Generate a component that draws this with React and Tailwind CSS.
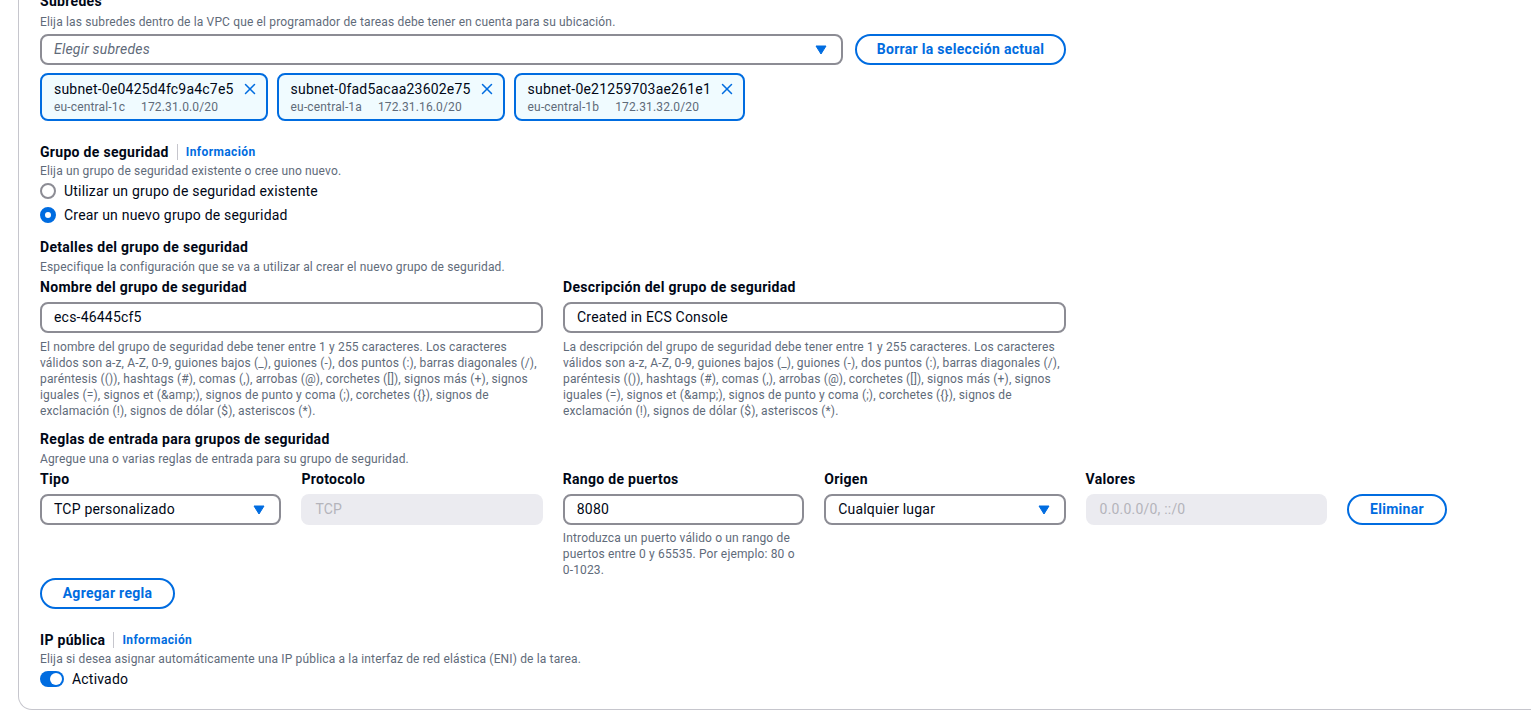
import { X } from "lucide-react";

const font = { fontFamily: "Roboto, 'Noto Sans', sans-serif" };

const subnets = [
  { id: "subnet-0e0425d4fc9a4c7e5", az: "eu-central-1c", cidr: "172.31.0.0/20" },
  { id: "subnet-0fad5acaa23602e75", az: "eu-central-1a", cidr: "172.31.16.0/20" },
  { id: "subnet-0e21259703ae261e1", az: "eu-central-1b", cidr: "172.31.32.0/20" },
];

const helpText =
  "válidos son a-z, A-Z, 0-9, guiones bajos (_), guiones (-), dos puntos (:), barras diagonales (/), paréntesis (()), hashtags (#), comas (,), arrobas (@), corchetes ([]), signos más (+), signos iguales (=), signos et (&amp;), signos de punto y coma (;), corchetes ({}), signos de exclamación (!), signos de dólar ($), asteriscos (*).";

function Caret() {
  return (
    <svg width="12" height="10" viewBox="0 0 12 10" className="shrink-0">
      <path d="M1 1h10L6 9z" fill="#006ce0" stroke="#006ce0" strokeWidth="1" strokeLinejoin="round" />
    </svg>
  );
}

function Info() {
  return (
    <>
      <span className="mx-[8px] h-[16px] w-px bg-[#c6c6cd]" />
      <span className="text-[12px] font-bold tracking-[0.4px] text-[#006ce0]">Información</span>
    </>
  );
}

function Label({ children }) {
  return (
    <div className="text-[14px] font-bold leading-[18px] tracking-[0.3px] text-[#000716]">{children}</div>
  );
}

function Desc({ children }) {
  return <div className="text-[12px] leading-[16px] tracking-[0.15px] text-[#5f6b7a]">{children}</div>;
}

function TextInput({ value }) {
  return (
    <div className="flex h-[31px] items-center rounded-[8px] border-2 border-[#8c8c94] px-[12px] text-[14px] tracking-[0.2px] text-[#000716]">
      {value}
    </div>
  );
}

function SelectBox({ value, italic }) {
  return (
    <div className="flex h-[31px] items-center justify-between rounded-[8px] border-2 border-[#8c8c94] pl-[12px] pr-[14px] text-[14px] tracking-[0.2px]">
      <span className={italic ? "italic text-[#5f6b7a]" : "text-[#000716]"}>{value}</span>
      <Caret />
    </div>
  );
}

function Disabled({ value }) {
  return (
    <div className="flex h-[31px] items-center rounded-[8px] bg-[#ebebf0] px-[14px] text-[14px] tracking-[0.2px] text-[#b4b4bb]">
      {value}
    </div>
  );
}

function OutlineButton({ children, className = "" }) {
  return (
    <div
      className={`flex h-[31px] items-center justify-center whitespace-nowrap rounded-full border-2 border-[#006ce0] text-[14px] font-bold tracking-[0.3px] text-[#006ce0] ${className}`}
    >
      {children}
    </div>
  );
}

export default function App() {
  return (
    <div className="h-[713px] overflow-hidden bg-white" style={font}>
      <div className="ml-[18px] mt-[-8px] rounded-bl-[14px] border-b border-l border-[#c6c6cd] pb-[20px] pl-[21px]">
        {/* Subredes */}
        <Label>Subredes</Label>
        <div className="mt-[4px]">
          <Desc>Elija las subredes dentro de la VPC que el programador de tareas debe tener en cuenta para su ubicación.</Desc>
        </div>
        <div className="mt-[4px] flex items-center gap-[12px]">
          <div className="w-[803px]">
            <SelectBox value="Elegir subredes" italic />
          </div>
          <OutlineButton className="w-[211px]">Borrar la selección actual</OutlineButton>
        </div>
        <div className="mt-[8px] flex gap-[9px]">
          {subnets.map((s) => (
            <div
              key={s.id}
              className="flex h-[48px] items-start rounded-[8px] border-2 border-[#006ce0] bg-[#f0fbff] pl-[12px] pr-[7px] pt-[5px]"
            >
              <div>
                <div className="text-[14px] leading-[18px] tracking-[0.2px] text-[#000716]">{s.id}</div>
                <div className="mt-[1px] flex gap-[16px] text-[12px] leading-[16px] tracking-[0.15px] text-[#5f6b7a]">
                  <span>{s.az}</span>
                  <span>{s.cidr}</span>
                </div>
              </div>
              <X className="ml-[7px] text-[#006ce0]" size={18} strokeWidth={2} />
            </div>
          ))}
        </div>

        {/* Grupo de seguridad */}
        <div className="mt-[22px] flex items-center">
          <Label>Grupo de seguridad</Label>
          <Info />
        </div>
        <div className="mt-[2px]">
          <Desc>Elija un grupo de seguridad existente o cree uno nuevo.</Desc>
        </div>
        <div className="mt-[2px] flex items-center gap-[8px] text-[14px] leading-[20px] tracking-[0.2px] text-[#000716]">
          <span className="h-[16px] w-[16px] rounded-full border-2 border-[#8c8c94]" />
          Utilizar un grupo de seguridad existente
        </div>
        <div className="mt-[4px] flex items-center gap-[8px] text-[14px] leading-[20px] tracking-[0.2px] text-[#000716]">
          <span className="h-[16px] w-[16px] rounded-full border-[5px] border-[#006ce0] bg-white" />
          Crear un nuevo grupo de seguridad
        </div>

        <div className="mt-[13px]">
          <Label>Detalles del grupo de seguridad</Label>
        </div>
        <div className="mt-[3px]">
          <Desc>Especifique la configuración que se va a utilizar al crear el nuevo grupo de seguridad.</Desc>
        </div>
        <div className="mt-[3px] grid w-[1026px] grid-cols-2 gap-[20px]">
          <div>
            <Label>Nombre del grupo de seguridad</Label>
            <div className="mt-[6px]">
              <TextInput value="ecs-46445cf5" />
            </div>
            <div className="mt-[6px]">
              <Desc>
                El nombre del grupo de seguridad debe tener entre 1 y 255 caracteres. Los caracteres {helpText}
              </Desc>
            </div>
          </div>
          <div>
            <Label>Descripción del grupo de seguridad</Label>
            <div className="mt-[6px]">
              <TextInput value="Created in ECS Console" />
            </div>
            <div className="mt-[6px]">
              <Desc>
                La descripción del grupo de seguridad debe tener entre 1 y 255 caracteres. Los caracteres {helpText}
              </Desc>
            </div>
          </div>
        </div>

        {/* Reglas de entrada */}
        <div className="mt-[11px]">
          <Label>Reglas de entrada para grupos de seguridad</Label>
        </div>
        <div className="mt-[3px]">
          <Desc>Agregue una o varias reglas de entrada para su grupo de seguridad.</Desc>
        </div>
        <div className="mt-[3px] flex items-start gap-[20px]">
          <div className="grid w-[1287px] grid-cols-5 gap-[20px]">
            <div>
              <Label>Tipo</Label>
              <div className="mt-[6px]">
                <SelectBox value="TCP personalizado" />
              </div>
            </div>
            <div>
              <Label>Protocolo</Label>
              <div className="mt-[6px]">
                <Disabled value="TCP" />
              </div>
            </div>
            <div>
              <Label>Rango de puertos</Label>
              <div className="mt-[6px]">
                <TextInput value="8080" />
              </div>
              <div className="mt-[5px]">
                <Desc>
                  Introduzca un puerto válido o un rango de puertos entre 0 y 65535. Por ejemplo: 80 o 0-1023.
                </Desc>
              </div>
            </div>
            <div>
              <Label>Origen</Label>
              <div className="mt-[6px]">
                <SelectBox value="Cualquier lugar" />
              </div>
            </div>
            <div>
              <Label>Valores</Label>
              <div className="mt-[6px]">
                <Disabled value="0.0.0.0/0, ::/0" />
              </div>
            </div>
          </div>
          <OutlineButton className="mt-[24px] w-[100px]">Eliminar</OutlineButton>
        </div>
        <OutlineButton className="mt-[0px] w-[135px]">Agregar regla</OutlineButton>

        {/* IP pública */}
        <div className="mt-[22px] flex items-center">
          <Label>IP pública</Label>
          <Info />
        </div>
        <div className="mt-[2px]">
          <Desc>Elija si desea asignar automáticamente una IP pública a la interfaz de red elástica (ENI) de la tarea.</Desc>
        </div>
        <div className="mt-[2px] flex items-center gap-[8px] text-[14px] leading-[20px] tracking-[0.2px] text-[#000716]">
          <span className="flex h-[16px] w-[24px] items-center justify-end rounded-full bg-[#006ce0] pr-[2px]">
            <span className="h-[12px] w-[12px] rounded-full bg-white" />
          </span>
          Activado
        </div>
      </div>
    </div>
  );
}
